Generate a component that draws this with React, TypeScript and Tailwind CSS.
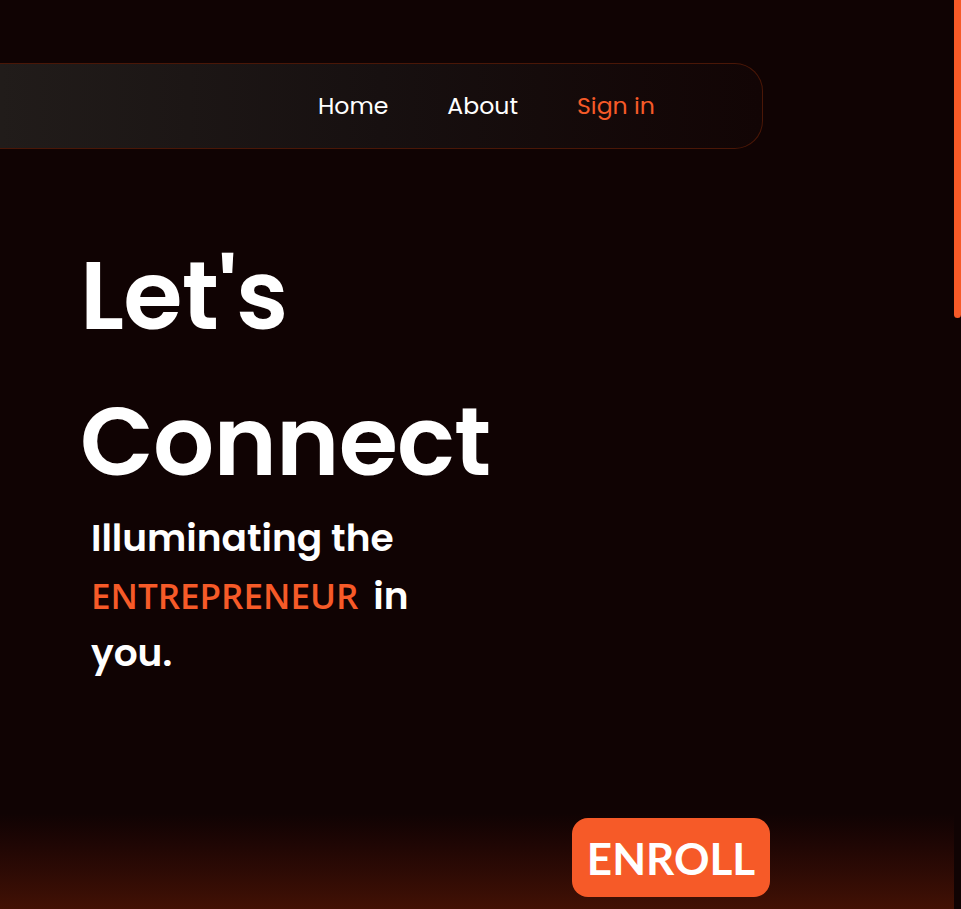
import React from "react";

export default function App() {
  return (
    <div
      className="flex h-screen w-full overflow-hidden bg-[#100303]"
      style={{ fontFamily: "Poppins, Inter, 'Noto Sans', sans-serif" }}
    >
      <div className="flex min-w-0 flex-1 flex-col">
        {/* Navbar */}
        <nav className="mt-[63px] flex h-[86px] w-[763px] shrink-0 items-center gap-[59px] rounded-r-[28px] border border-l-0 border-[#4a1707] bg-gradient-to-r from-[#211c1a] via-[#171010] to-[#120505] pl-[318px]">
          <a className="text-[23.6px] font-normal text-white">Home</a>
          <a className="text-[23.6px] font-normal text-white">About</a>
          <a className="text-[23.6px] font-normal text-[#f65a28]">Sign in</a>
        </nav>

        {/* Hero */}
        <div className="pl-[80px] pt-[74px]">
          <h1 className="text-[96px] font-semibold leading-[146px] tracking-[-0.8px] text-white">
            Let's
            <br />
            Connect
          </h1>
        </div>
        <p className="mt-[-5px] w-[420px] pl-[91px] text-[37.5px] font-semibold leading-[57px] text-white">
          Illuminating the{" "}
          <span
            className="text-[35px] font-semibold leading-[57px] text-[#f65a28]"
            style={{ fontFamily: "'Open Sans', sans-serif" }}
          >
            ENTREPRENEUR
          </span>
          <span className="ml-[6px]"> in</span> you.
        </p>

        {/* Bottom section */}
        <div className="mt-auto flex h-[95px] shrink-0 items-end bg-gradient-to-b from-[#100303] to-[#421104] pb-[12px] pl-[572px]">
          <button
            className="flex h-[79px] w-[198px] items-center justify-center rounded-[16px] bg-[#f65a28] text-[44px] font-bold text-white"
            style={{ fontFamily: "Lato, sans-serif" }}
          >
            ENROLL
          </button>
        </div>
      </div>

      {/* Scrollbar */}
      <div className="w-[7px] shrink-0 bg-[#100303]">
        <div className="h-[318px] w-full rounded-b-full bg-[#f65a28]" />
      </div>
    </div>
  );
}
